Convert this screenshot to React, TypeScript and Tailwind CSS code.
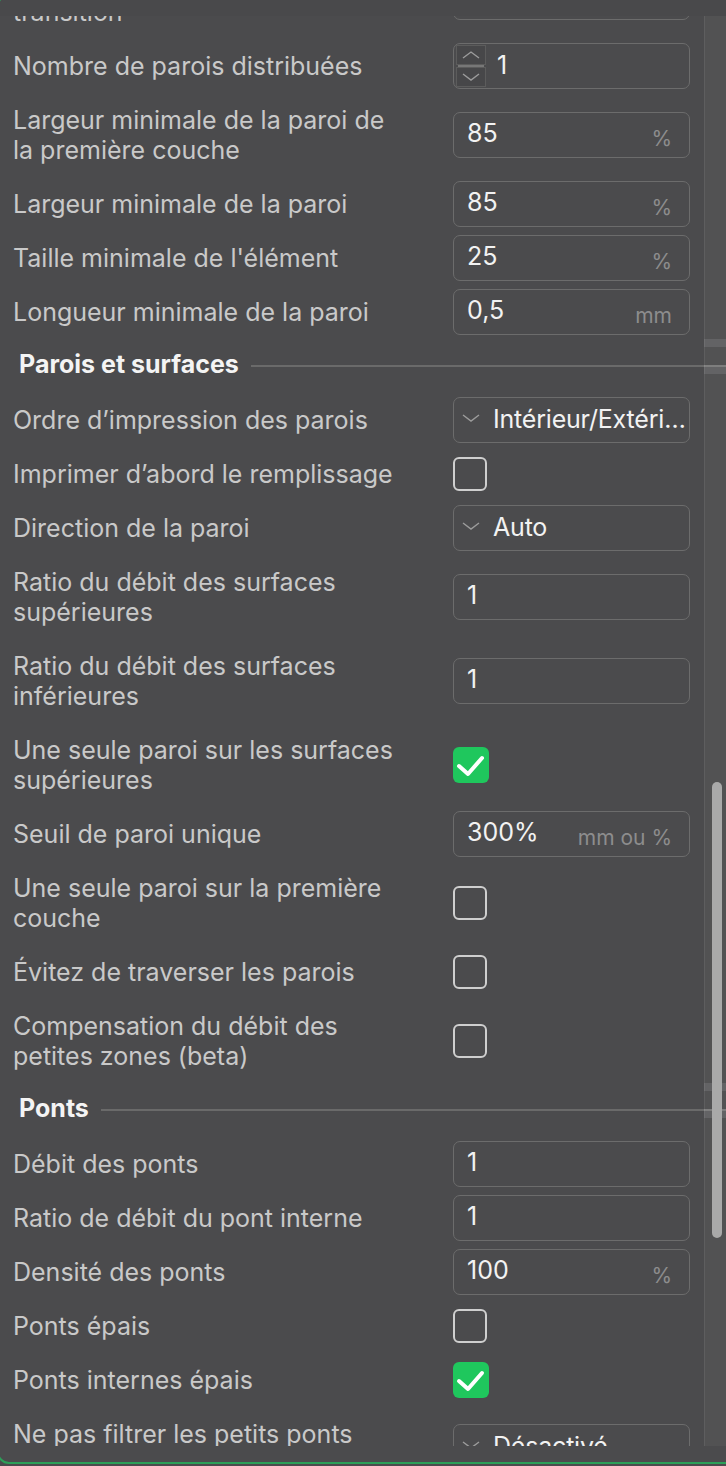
import React from "react";

type Ctl =
  | { kind: "num"; value: string; unit?: string }
  | { kind: "spin"; value: string }
  | { kind: "select"; value: string; low?: boolean }
  | { kind: "check"; checked: boolean };

type Item = { label: string[]; ctl: Ctl } | { section: string };

const ITEMS: Item[] = [
  { label: ["Longueur de la paroi de", "transition"], ctl: { kind: "num", value: "" } },
  { label: ["Nombre de parois distribuées"], ctl: { kind: "spin", value: "1" } },
  { label: ["Largeur minimale de la paroi de", "la première couche"], ctl: { kind: "num", value: "85", unit: "%" } },
  { label: ["Largeur minimale de la paroi"], ctl: { kind: "num", value: "85", unit: "%" } },
  { label: ["Taille minimale de l'élément"], ctl: { kind: "num", value: "25", unit: "%" } },
  { label: ["Longueur minimale de la paroi"], ctl: { kind: "num", value: "0,5", unit: "mm" } },
  { section: "Parois et surfaces" },
  { label: ["Ordre d’impression des parois"], ctl: { kind: "select", value: "Intérieur/Extérieur" } },
  { label: ["Imprimer d’abord le remplissage"], ctl: { kind: "check", checked: false } },
  { label: ["Direction de la paroi"], ctl: { kind: "select", value: "Auto" } },
  { label: ["Ratio du débit des surfaces", "supérieures"], ctl: { kind: "num", value: "1" } },
  { label: ["Ratio du débit des surfaces", "inférieures"], ctl: { kind: "num", value: "1" } },
  { label: ["Une seule paroi sur les surfaces", "supérieures"], ctl: { kind: "check", checked: true } },
  { label: ["Seuil de paroi unique"], ctl: { kind: "num", value: "300%", unit: "mm ou %" } },
  { label: ["Une seule paroi sur la première", "couche"], ctl: { kind: "check", checked: false } },
  { label: ["Évitez de traverser les parois"], ctl: { kind: "check", checked: false } },
  { label: ["Compensation du débit des", "petites zones (beta)"], ctl: { kind: "check", checked: false } },
  { section: "Ponts" },
  { label: ["Débit des ponts"], ctl: { kind: "num", value: "1" } },
  { label: ["Ratio de débit du pont interne"], ctl: { kind: "num", value: "1" } },
  { label: ["Densité des ponts"], ctl: { kind: "num", value: "100", unit: "%" } },
  { label: ["Ponts épais"], ctl: { kind: "check", checked: false } },
  { label: ["Ponts internes épais"], ctl: { kind: "check", checked: true } },
  { label: ["Ne pas filtrer les petits ponts"], ctl: { kind: "select", value: "Désactivé", low: true } },
];

function Chevron({ up = false }: { up?: boolean }) {
  return (
    <svg width="18" height="8" viewBox="0 0 18 8" className="shrink-0">
      <polyline
        points={up ? "1,7 9,1 17,7" : "1,1 9,7 17,1"}
        fill="none"
        stroke="#9c9c9c"
        strokeWidth="1.4"
      />
    </svg>
  );
}

function Control({ ctl }: { ctl: Ctl }) {
  if (ctl.kind === "check") {
    return ctl.checked ? (
      <div className="-my-[3px] flex h-[36px] w-[36px] items-center justify-center rounded-[6px] bg-[#1fc75d]">
        <svg width="36" height="36" viewBox="0 0 36 36">
          <polyline points="6,19 15,27 29,11" fill="none" stroke="#ffffff" strokeWidth="4" strokeLinecap="round" strokeLinejoin="round" />
        </svg>
      </div>
    ) : (
      <div className="-my-[2px] h-[34px] w-[34px] rounded-[6px] border-2 border-[#cfcfcf]" />
    );
  }

  const box = "flex h-[46px] w-[237px] items-center rounded-[7px] border-[1.5px] border-[#6c6c6c]";

  if (ctl.kind === "spin") {
    return (
      <div className={`${box} -my-2`}>
        <div className="ml-[2px] flex w-[30px] flex-col">
          <div className="flex h-[20px] items-center justify-center border border-[#5c5c5c] bg-[#474749]">
            <Chevron up />
          </div>
          <div className="mx-[2px] h-[2px] bg-[#777777]" />
          <div className="flex h-[20px] items-center justify-center border border-[#5c5c5c] bg-[#474749]">
            <Chevron />
          </div>
        </div>
        <span className="ml-[11px] text-[25px] text-[#f2f2f2]">{ctl.value}</span>
      </div>
    );
  }

  if (ctl.kind === "select") {
    return (
      <div className={`${box} ${ctl.low ? "mt-[5px] -mb-[21px]" : "-my-2"}`}>
        <div className="ml-[8px] mr-[13px] flex -mt-[4px]">
          <Chevron />
        </div>
        <span className="truncate text-[25px] tracking-[-0.2px] text-[#f2f2f2]">{ctl.value}</span>
      </div>
    );
  }

  return (
    <div className={`${box} -my-2 justify-between px-[13px]`}>
      <span className="-mt-[3px] text-[25px] text-[#f2f2f2]">{ctl.value}</span>
      {ctl.unit && <span className="mt-[8px] pr-[4px] text-[21px] text-[#8d8d8d]">{ctl.unit}</span>}
    </div>
  );
}

function Section({ title }: { title: string }) {
  return (
    <div className="relative flex h-[54px] items-center">
      <span className="-mt-[3px] pl-[19px] text-[25px] font-bold text-[#f4f4f4]">{title}</span>
      <div className="ml-[12px] h-[2px] flex-1 bg-[#6a6a6a]" />
      {/* ghost bands in the scroll track */}
      <div className="absolute right-0 top-0 h-[8px] w-[22px] bg-white/[0.1]" />
      <div className="absolute right-0 top-[26px] h-[9px] w-[22px] bg-white/[0.1]" />
    </div>
  );
}

export default function App() {
  return (
    <div
      className="relative h-[1466px] w-[726px] overflow-hidden bg-[#4b4b4d]"
      style={{ fontFamily: "Inter, 'Noto Sans', sans-serif" }}
    >
      <div className="h-[16px] bg-[#49494b]" />

      {/* Scroll viewport */}
      <div className="relative h-[1430px] overflow-hidden">
        <div className="-mt-[61px] flex flex-col">
          {ITEMS.map((it, i) =>
            "section" in it ? (
              <Section key={i} title={it.section} />
            ) : (
              <div key={i} className="flex items-center py-3">
                <div className="w-[453px] pl-[13px] text-[25px] leading-[30px] text-[#c9c9c9]">
                  {it.label.map((l) => (
                    <div key={l} className="whitespace-nowrap">{l}</div>
                  ))}
                </div>
                <Control ctl={it.ctl} />
              </div>
            )
          )}
        </div>

        {/* Scrollbar */}
        <div className="absolute bottom-0 right-0 top-0 w-[22px] border-l border-white/[0.07] bg-white/[0.04]" />
        <div className="absolute right-[4px] top-[766px] h-[456px] w-[10px] rounded-full bg-[#a9a9a9]" />
      </div>

      {/* Window frame */}
      <div className="pointer-events-none absolute -left-[3px] -top-[6px] h-[1470px] w-[740px] rounded-[12px] border-2 border-[#2c9f58]" />
    </div>
  );
}
